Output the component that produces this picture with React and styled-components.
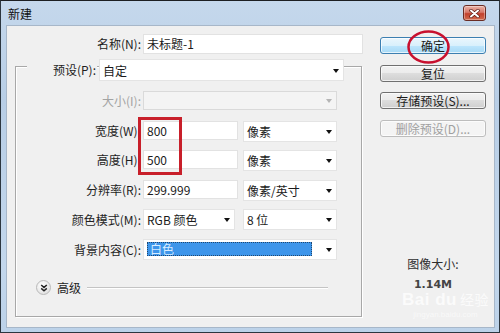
import React from 'react';
import styled, { createGlobalStyle } from 'styled-components';

const Global = createGlobalStyle`
  html, body { margin: 0; padding: 0; }
  body {
    width: 500px; height: 333px; overflow: hidden;
    font-family: "Noto Sans CJK SC", "Noto Sans", sans-serif;
    font-size: 12px; color: #1e1e1e;
  }
  * { box-sizing: border-box; }
`;

const Window = styled.div`
  position: relative;
  width: 500px;
  height: 333px;
  border: 1px solid #2c363f;
  border-top-color: #1c1f22;
  background: linear-gradient(#c5d8ec, #b8cee6 30%, #c3d7ec 80%, #bcd2e9);
  display: flex;
  flex-direction: column;
  padding: 0 4px 4px 5px;
`;

const TitleBar = styled.div`
  height: 24px;
  display: flex;
  align-items: flex-start;
  justify-content: space-between;
  padding: 4px 9px 0 2px;
`;

const Title = styled.div`
  font-size: 12px;
  line-height: 16px;
  color: #111;
  padding-top: 1px;
`;

const CloseBtn = styled.div`
  width: 23px;
  height: 16px;
  border: 1px solid #6a2c24;
  border-radius: 3px;
  background: linear-gradient(#eab3a6, #d6786a 45%, #c2402c 55%, #d06a4e);
  display: flex;
  align-items: center;
  justify-content: center;
  box-shadow: inset 0 0 0 1px rgba(255,255,255,0.35);
`;

const Body = styled.div`
  flex: 1;
  background: #f0f0f0;
  border: 1px solid #a7b7c9;
  display: flex;
  padding: 8px 8px 0 8px;
  gap: 17px;
`;

const LeftCol = styled.div`
  width: 348px;
  display: flex;
  flex-direction: column;
`;

const NameRow = styled.div`
  display: flex;
  align-items: center;
  height: 20px;
`;

const Label = styled.div`
  width: ${p => p.$w || 125}px;
  margin-right: 2px;
  text-align: right;
  line-height: ${p => p.$lh || 19}px;
  white-space: nowrap;
  color: ${p => (p.$disabled ? '#a3a3a3' : '#1e1e1e')};
`;

const TextInput = styled.div`
  width: ${p => p.$w}px;
  height: ${p => p.$h || 19}px;
  background: #fff;
  border: 1px solid #e2e2e2;
  padding-left: 3px;
  line-height: ${p => (p.$h || 19) - 2}px;
  color: #1a1a1a;
`;

const Group = styled.div`
  margin-top: 12px;
  width: 347px;
  height: 251px;
  border: 1px solid #a8a8a8;
  box-shadow: inset 1px 1px 0 #fff, 1px 1px 0 #fff;
  display: flex;
  flex-direction: column;
`;

const PresetRow = styled.div`
  margin-top: -8px;
  display: flex;
  padding-left: 11px;
  height: 22px;
`;

const PresetLabel = styled.div`
  width: 70px;
  background: #f0f0f0;
  text-align: right;
  padding-right: 1px;
  line-height: 22px;
  margin-right: 2px;
`;

const Select = styled.div`
  width: ${p => p.$w}px;
  height: ${p => p.$h || 21}px;
  background: ${p => (p.$disabled ? '#f4f4f4' : '#fff')};
  border: 1px solid ${p => (p.$disabled ? '#dadada' : '#e4e4e4')};
  display: flex;
  align-items: center;
  justify-content: space-between;
  padding: 0 4px 0 3px;
  color: #1a1a1a;
`;

const Arrow = styled.span`
  width: 0;
  height: 0;
  border-left: 3.5px solid transparent;
  border-right: 3.5px solid transparent;
  border-top: 4px solid ${p => (p.$disabled ? '#b5b5b5' : '#111')};
  margin-top: 1px;
`;

const Highlight = styled.div`
  flex: 1;
  height: 14px;
  margin-right: 14px;
  background: #3d95ea;
  outline: 1px dotted #20476e;
  outline-offset: -1px;
  color: #d8ecff;
  line-height: 14px;
  padding-left: 3px;
`;

const Fields = styled.div`
  margin-top: 10px;
  display: grid;
  grid-auto-rows: 21px;
  row-gap: 8.6px;
`;

const Row = styled.div`
  display: flex;
  align-items: flex-start;
`;

const Controls = styled.div`
  display: flex;
  gap: ${p => p.$gap}px;
  align-items: flex-start;
`;

const AdvancedRow = styled.div`
  margin-top: 20px;
  display: flex;
  align-items: center;
  height: 16px;
  padding-left: 20px;
  padding-right: 33px;
`;

const Chevron = styled.div`
  width: 15px;
  height: 15px;
  border-radius: 50%;
  border: 1px solid #b9b9b9;
  background: radial-gradient(circle at 40% 35%, #ffffff, #e4e4e4 70%, #cfcfcf);
  display: flex;
  align-items: center;
  justify-content: center;
`;

const AdvText = styled.span`
  margin-left: 6px;
  line-height: 16px;
`;

const Rule = styled.div`
  flex: 1;
  height: 1px;
  background: #c4c4c4;
  margin-left: 6px;
  box-shadow: 0 1px 0 #fff;
`;

const RightCol = styled.div`
  width: 106px;
  display: flex;
  flex-direction: column;
  padding-top: 3px;
`;

const Button = styled.div`
  height: 17px;
  margin-bottom: 10.7px;
  border: 1px solid ${p => (p.$primary ? '#3c7fb1' : p.$disabled ? '#bdbdbd' : '#707070')};
  border-radius: 3px;
  background: ${p =>
    p.$primary
      ? 'linear-gradient(#eaf6fd, #d9f0fc 50%, #bee6fd 50%, #a7d9f5)'
      : p.$disabled
      ? '#f4f4f4'
      : 'linear-gradient(#f2f2f2, #ebebeb 50%, #dddddd 50%, #cfcfcf)'};
  box-shadow: inset 0 0 0 1px rgba(255,255,255,0.7);
  text-align: center;
  line-height: 15px;
  color: ${p => (p.$disabled ? '#a0a0a0' : '#1a1a1a')};
`;

const SizeInfo = styled.div`
  margin-top: 109px;
  text-align: center;
  line-height: 14px;
  color: #2e2e2e;
`;

const SizeValue = styled.div`
  margin-top: 7px;
  text-align: center;
  font-size: 11px;
  font-weight: bold;
  line-height: 13px;
  color: #444;
  font-family: "DejaVu Sans", sans-serif;
`;

const RedRect = styled.div`
  position: absolute;
  left: 137px;
  top: 116px;
  width: 44px;
  height: 58px;
  border: 3px solid #c81f2a;
  pointer-events: none;
`;

const RedEllipse = styled.svg`
  position: absolute;
  left: 404px;
  top: 27px;
  pointer-events: none;
`;

const Watermark = styled.div`
  position: absolute;
  left: 401px;
  top: 291px;
  color: rgba(255,255,255,0.75);
  text-align: center;
  pointer-events: none;
`;

const WmMain = styled.div`
  font-family: "Liberation Sans", sans-serif;
  font-weight: bold;
  font-size: 17px;
  line-height: 15px;
  letter-spacing: 0.5px;
  span { font-family: "Noto Sans CJK SC", sans-serif; font-size: 14px; font-weight: normal; margin-left: 3px; }
`;

const WmSub = styled.div`
  margin-top: 3px;
  font-family: "Liberation Sans", sans-serif;
  font-size: 8px;
  line-height: 10px;
  color: rgba(255,255,255,0.6);
`;

export default function App() {
  return (
    <>
      <Global />
      <Window>
        <TitleBar>
          <Title>新建</Title>
          <CloseBtn>
            <svg width="11" height="9" viewBox="0 0 11 9">
              <path d="M2 1.5 L9 7.5 M9 1.5 L2 7.5" stroke="#5a1a12" strokeWidth="3.4" strokeLinecap="round" />
              <path d="M2 1.5 L9 7.5 M9 1.5 L2 7.5" stroke="#fff" strokeWidth="2" strokeLinecap="round" />
            </svg>
          </CloseBtn>
        </TitleBar>
        <Body>
          <LeftCol>
            <NameRow>
              <Label $w={126} $lh={20}>名称(N):</Label>
              <TextInput $w={220} $h={20}>未标题-1</TextInput>
            </NameRow>
            <Group>
              <PresetRow>
                <PresetLabel>预设(P):</PresetLabel>
                <Select $w={245} $h={22}>
                  <span>自定</span>
                  <Arrow />
                </Select>
              </PresetRow>
              <Fields>
                <Row>
                  <Label $disabled>大小(I):</Label>
                  <Select $w={194} $h={19} $disabled>
                    <span />
                    <Arrow $disabled />
                  </Select>
                </Row>
                <Row>
                  <Label>宽度(W):</Label>
                  <Controls $gap={5}>
                    <TextInput $w={95}>800</TextInput>
                    <Select $w={94}><span>像素</span><Arrow /></Select>
                  </Controls>
                </Row>
                <Row>
                  <Label>高度(H):</Label>
                  <Controls $gap={5}>
                    <TextInput $w={95}>500</TextInput>
                    <Select $w={94}><span>像素</span><Arrow /></Select>
                  </Controls>
                </Row>
                <Row>
                  <Label>分辨率(R):</Label>
                  <Controls $gap={5}>
                    <TextInput $w={95}>299.999</TextInput>
                    <Select $w={94}><span>像素/英寸</span><Arrow /></Select>
                  </Controls>
                </Row>
                <Row>
                  <Label $lh={21}>颜色模式(M):</Label>
                  <Controls $gap={8}>
                    <Select $w={92}><span>RGB 颜色</span><Arrow /></Select>
                    <Select $w={94}><span>8 位</span><Arrow /></Select>
                  </Controls>
                </Row>
                <Row>
                  <Label $lh={21}>背景内容(C):</Label>
                  <Select $w={194}>
                    <Highlight>白色</Highlight>
                    <Arrow />
                  </Select>
                </Row>
              </Fields>
              <AdvancedRow>
                <Chevron>
                  <svg width="8" height="8" viewBox="0 0 8 8">
                    <path d="M1.2 1 L4 3.4 L6.8 1 M1.2 4.4 L4 6.8 L6.8 4.4" fill="none" stroke="#222" strokeWidth="1.5" />
                  </svg>
                </Chevron>
                <AdvText>高级</AdvText>
                <Rule />
              </AdvancedRow>
            </Group>
          </LeftCol>
          <RightCol>
            <Button $primary>确定</Button>
            <Button>复位</Button>
            <Button>存储预设(S)...</Button>
            <Button $disabled>删除预设(D)...</Button>
            <SizeInfo>图像大小:</SizeInfo>
            <SizeValue>1.14M</SizeValue>
          </RightCol>
        </Body>
        <RedRect />
        <RedEllipse width="48" height="38" viewBox="0 0 48 38">
          <ellipse cx="23.5" cy="19" rx="20" ry="15.5" fill="none" stroke="#c8102e" strokeWidth="2.5" />
        </RedEllipse>
        <Watermark>
          <WmMain>Bai du<span>经验</span></WmMain>
          <WmSub>jingyan.baidu.com</WmSub>
        </Watermark>
      </Window>
    </>
  );
}
